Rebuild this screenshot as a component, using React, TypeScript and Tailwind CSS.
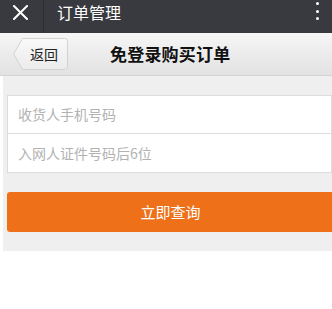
export default function App() {
  return (
    <div className="w-[332px] h-[309px] bg-white overflow-hidden font-['Noto_Sans_CJK_SC','Noto_Sans',sans-serif]">
      {/* top bar */}
      <div className="h-[33px] bg-[#393a3f] flex items-stretch">
        <div className="w-[44px] border-r border-[#2e2f33] pt-[5px] pl-[13px] pb-[3px]">
          <svg width="15" height="15" viewBox="0 0 15 15">
            <path d="M1 1 L14 14 M14 1 L1 14" stroke="#fff" strokeWidth="2" strokeLinecap="square" />
          </svg>
        </div>
        <div className="ml-[13px] text-[16px] leading-[24px] text-white">订单管理</div>
        <div className="ml-auto mr-[13px] flex flex-col gap-[4.5px] pt-[2px]">
          <span className="w-[3px] h-[3px] rounded-full bg-white" />
          <span className="w-[3px] h-[3px] rounded-full bg-white" />
          <span className="w-[3px] h-[3px] rounded-full bg-white" />
        </div>
      </div>

      {/* page header */}
      <div className="h-[43px] bg-gradient-to-b from-[#f6f6f6] to-[#e2e2e2] border-b border-[#d4d4d4] flex items-center">
        <div className="relative ml-[13px] w-[55px] h-[32px] flex items-center">
          <svg className="absolute inset-0" width="55" height="32" viewBox="0 0 55 32">
            <defs>
              <linearGradient id="bk" x1="0" y1="0" x2="0" y2="1">
                <stop offset="0" stopColor="#f9f9f9" />
                <stop offset="1" stopColor="#ebebeb" />
              </linearGradient>
            </defs>
            <path
              d="M9.5 0.5 H51.5 Q54.5 0.5 54.5 3.5 V28.5 Q54.5 31.5 51.5 31.5 H9.5 L0.7 16 Z"
              fill="url(#bk)"
              stroke="#d2d2d2"
            />
          </svg>
          <span className="relative ml-[17px] text-[14px] text-[#222]">返回</span>
        </div>
        <div className="ml-[42px] text-[17px] font-bold text-[#111] tracking-[0.2px]">免登录购买订单</div>
      </div>

      {/* content */}
      <div className="ml-[3px] bg-[#efefef] pt-[19px] pb-[19px]">
        <div className="ml-[4px] bg-white border border-[#dcdcdc]">
          <div className="h-[38px] flex items-center pl-[10px] text-[14px] text-[#b2b2b2] border-b border-[#dcdcdc]">
            收货人手机号码
          </div>
          <div className="h-[38px] flex items-center pl-[10px] text-[14px] text-[#b2b2b2]">
            入网人证件号码后6位
          </div>
        </div>
        <button
          type="button"
          className="mt-[19px] ml-[4px] w-[325px] h-[40px] rounded-l-[3px] bg-[#ee711a] text-white text-[15px] pl-[2px]"
        >
          立即查询
        </button>
      </div>
    </div>
  );
}
